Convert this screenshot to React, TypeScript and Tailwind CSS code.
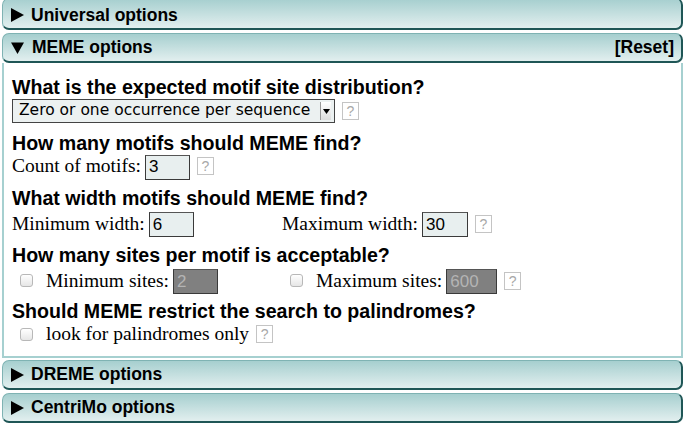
import type { ReactNode } from "react";

const sans = "font-['Liberation_Sans','Arial',sans-serif]";
const serif = "font-['Liberation_Serif','Times_New_Roman',serif]";

function Triangle({ open }: { open: boolean }) {
  return open ? (
    <svg width="13" height="12" viewBox="0 0 13 12" className="mr-[8px]">
      <path d="M0 0.5 L13 0.5 L6.5 12 Z" fill="#000" />
    </svg>
  ) : (
    <svg width="13" height="14" viewBox="0 0 13 14" className="mr-[7px]">
      <path d="M0 0 L13 7 L0 14 Z" fill="#000" />
    </svg>
  );
}

function Bar({ title, open = false, reset = false, tall = false }: { title: string; open?: boolean; reset?: boolean; tall?: boolean }) {
  return (
    <div
      className={`flex items-center rounded-[7px] border border-[#7fb3b3] border-b-[2px] border-r-[2px] border-b-[#1f5656] border-r-[#1f5656] bg-gradient-to-b from-[#a6cfcf] to-[#e2efef] pl-[8px] pr-[7px] text-[17.5px] font-bold text-black ${sans} ${
        tall ? "mt-[-2px] h-[32px] pt-[3px]" : "h-[30px]"
      }`}
    >
      <Triangle open={open} />
      <span>{title}</span>
      {reset ? <span className="ml-auto">[Reset]</span> : null}
    </div>
  );
}

function Help() {
  return (
    <span className={`ml-[7px] inline-flex h-[18px] w-[17px] items-center justify-center border border-[#c4c4c4] bg-white text-[14px] leading-none text-[#a8a8a8] ${sans}`}>
      ?
    </span>
  );
}

function Heading({ children }: { children: ReactNode }) {
  return <h3 className={`h-[22px] text-[19.6px] font-bold leading-[22px] text-black ${sans}`}>{children}</h3>;
}

function TextBox({ value, width, disabled = false }: { value: string; width: number; disabled?: boolean }) {
  return (
    <input
      readOnly
      value={value}
      style={{ width }}
      className={`h-[25px] border border-[#3a3a3a] border-t-[#555] px-[3px] text-[17px] outline-none ${sans} ${
        disabled ? "bg-[#808080] text-[#b4b4b4]" : "bg-[#e8efef] text-black"
      }`}
    />
  );
}

function Checkbox() {
  return <span className="ml-[8px] mr-[13px] inline-block h-[13px] w-[13px] rounded-[3px] border border-[#b8b8b8] bg-gradient-to-b from-white to-[#e6e6e6]" />;
}

export default function App() {
  return (
    <div className="h-[424px] w-[685px] overflow-hidden bg-white px-[2px]">
      <Bar title="Universal options" tall />
      <div className="mt-[3px]">
        <Bar title="MEME options" open reset />
      </div>

      <div className={`h-[295px] border-x-[2px] border-b-[2px] border-[#a6d0d0] bg-white pl-[8px] pt-[13px] text-[19.5px] text-black ${serif}`}>
        <Heading>What is the expected motif site distribution?</Heading>
        <div className="mt-[1px] flex h-[24px] items-center">
          <div className="flex h-[24px] w-[323px] items-center border border-[#444] bg-[#ecf1f1] pl-[6px] pr-[3px]">
            <span className={`text-[15.5px] text-black font-['Lucida_Grande','DejaVu_Sans',sans-serif]`}>
              Zero or one occurrence per sequence
            </span>
            <span className="ml-auto flex h-[18px] w-[11px] items-center justify-center border-l border-[#999] bg-gradient-to-b from-white to-[#ddd]">
              <svg width="7" height="5" viewBox="0 0 7 5">
                <path d="M0 0 L7 0 L3.5 5 Z" fill="#000" />
              </svg>
            </span>
          </div>
          <Help />
        </div>

        <div className="mt-[9px]">
          <Heading>How many motifs should MEME find?</Heading>
        </div>
        <div className="flex h-[24px] items-center">
          <span>Count of motifs:</span>
          <span className="ml-[4px]">
            <TextBox value="3" width={45} />
          </span>
          <Help />
        </div>

        <div className="mt-[9px]">
          <Heading>What width motifs should MEME find?</Heading>
        </div>
        <div className="grid h-[24px] grid-cols-[270px_1fr] items-center">
          <div className="flex items-center">
            <span>Minimum width:</span>
            <span className="ml-[4px]">
              <TextBox value="6" width={45} />
            </span>
          </div>
          <div className="flex items-center">
            <span>Maximum width:</span>
            <span className="ml-[4px]">
              <TextBox value="30" width={46} />
            </span>
            <Help />
          </div>
        </div>

        <div className="mt-[11px]">
          <Heading>How many sites per motif is acceptable?</Heading>
        </div>
        <div className="grid h-[26px] grid-cols-[270px_1fr] items-center">
          <div className="flex items-center">
            <Checkbox />
            <span>Minimum sites:</span>
            <span className="ml-[4px]">
              <TextBox value="2" width={45} disabled />
            </span>
          </div>
          <div className="flex items-center">
            <Checkbox />
            <span>Maximum sites:</span>
            <span className="ml-[4px]">
              <TextBox value="600" width={51} disabled />
            </span>
            <Help />
          </div>
        </div>

        <div className="mt-[8px]">
          <Heading>Should MEME restrict the search to palindromes?</Heading>
        </div>
        <div className="flex h-[24px] items-center">
          <Checkbox />
          <span>look for palindromes only</span>
          <Help />
        </div>
      </div>

      <div className="mt-[2px]">
        <Bar title="DREME options" />
      </div>
      <div className="mt-[3px]">
        <Bar title="CentriMo options" />
      </div>
    </div>
  );
}
